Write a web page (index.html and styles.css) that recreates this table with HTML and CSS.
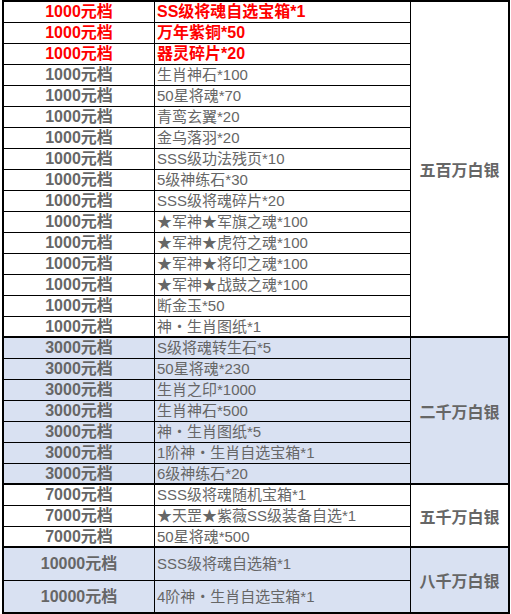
FILE: index.html
```html
<!DOCTYPE html>
<html lang="zh-CN">
<head>
<meta charset="utf-8">
<title>充值档位奖励</title>
<link rel="stylesheet" href="styles.css">
</head>
<body>
<div class="sheet">
  <section class="group">
    <div class="rows">
      <div class="row hot"><div class="price">1000元档</div><div class="item">SS级将魂自选宝箱*1</div></div>
      <div class="row hot"><div class="price">1000元档</div><div class="item">万年紫铜*50</div></div>
      <div class="row hot"><div class="price">1000元档</div><div class="item">器灵碎片*20</div></div>
      <div class="row"><div class="price">1000元档</div><div class="item">生肖神石*100</div></div>
      <div class="row"><div class="price">1000元档</div><div class="item">50星将魂*70</div></div>
      <div class="row"><div class="price">1000元档</div><div class="item">青鸾玄翼*20</div></div>
      <div class="row"><div class="price">1000元档</div><div class="item">金乌落羽*20</div></div>
      <div class="row"><div class="price">1000元档</div><div class="item">SSS级功法残页*10</div></div>
      <div class="row"><div class="price">1000元档</div><div class="item">5级神练石*30</div></div>
      <div class="row"><div class="price">1000元档</div><div class="item">SSS级将魂碎片*20</div></div>
      <div class="row"><div class="price">1000元档</div><div class="item">★军神★军旗之魂*100</div></div>
      <div class="row"><div class="price">1000元档</div><div class="item">★军神★虎符之魂*100</div></div>
      <div class="row"><div class="price">1000元档</div><div class="item">★军神★将印之魂*100</div></div>
      <div class="row"><div class="price">1000元档</div><div class="item">★军神★战鼓之魂*100</div></div>
      <div class="row"><div class="price">1000元档</div><div class="item">断金玉*50</div></div>
      <div class="row"><div class="price">1000元档</div><div class="item">神・生肖图纸*1</div></div>
    </div>
    <div class="reward">五百万白银</div>
  </section>
  <section class="group blue">
    <div class="rows">
      <div class="row"><div class="price">3000元档</div><div class="item">S级将魂转生石*5</div></div>
      <div class="row"><div class="price">3000元档</div><div class="item">50星将魂*230</div></div>
      <div class="row"><div class="price">3000元档</div><div class="item">生肖之印*1000</div></div>
      <div class="row"><div class="price">3000元档</div><div class="item">生肖神石*500</div></div>
      <div class="row"><div class="price">3000元档</div><div class="item">神・生肖图纸*5</div></div>
      <div class="row"><div class="price">3000元档</div><div class="item">1阶神・生肖自选宝箱*1</div></div>
      <div class="row"><div class="price">3000元档</div><div class="item">6级神练石*20</div></div>
    </div>
    <div class="reward">二千万白银</div>
  </section>
  <section class="group">
    <div class="rows">
      <div class="row"><div class="price">7000元档</div><div class="item">SSS级将魂随机宝箱*1</div></div>
      <div class="row"><div class="price">7000元档</div><div class="item">★天罡★紫薇SS级装备自选*1</div></div>
      <div class="row"><div class="price">7000元档</div><div class="item">50星将魂*500</div></div>
    </div>
    <div class="reward">五千万白银</div>
  </section>
  <section class="group blue tall">
    <div class="rows">
      <div class="row"><div class="price">10000元档</div><div class="item">SSS级将魂自选箱*1</div></div>
      <div class="row"><div class="price">10000元档</div><div class="item">4阶神・生肖自选宝箱*1</div></div>
    </div>
    <div class="reward">八千万白银</div>
  </section>
</div>
</body>
</html>
```

FILE: styles.css
```css
* {
  box-sizing: border-box;
  margin: 0;
  padding: 0;
}

html,
body {
  background: #ffffff;
}

body {
  padding-left: 2px;
  font-family: "Liberation Sans", "Noto Sans CJK SC", sans-serif;
  color: #666666;
}

.sheet {
  width: 508px;
  border: 2px solid #000000;
}

.group {
  display: flex;
}

.group + .group {
  border-top: 2px solid #000000;
}

.group.blue {
  background: #d9e1f2;
}

.rows {
  width: 407px;
  border-right: 1px solid #000000;
}

.row {
  display: flex;
  height: 21px;
  border-bottom: 1px solid #000000;
}

.row:last-child {
  height: 19px;
  border-bottom: 0;
}

.tall .row {
  height: 33px;
}

.tall .row:last-child {
  height: 31px;
}

.price {
  width: 151px;
  display: flex;
  align-items: center;
  justify-content: center;
  border-right: 1px solid #000000;
  font-size: 16px;
  font-weight: bold;
  line-height: 20px;
  white-space: nowrap;
}

.item {
  flex: 1;
  display: flex;
  align-items: center;
  padding-left: 2px;
  font-size: 15px;
  line-height: 20px;
  white-space: nowrap;
}

.hot {
  color: #ff0000;
}

.hot .item {
  font-size: 16px;
  font-weight: bold;
}

.reward {
  flex: 1;
  display: flex;
  align-items: center;
  justify-content: center;
  font-size: 16px;
  font-weight: bold;
}
```
